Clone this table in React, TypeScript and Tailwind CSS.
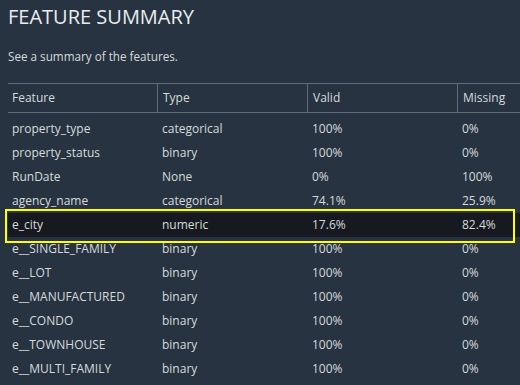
const rows = [
  { feature: "property_type", type: "categorical", valid: "100%", missing: "0%" },
  { feature: "property_status", type: "binary", valid: "100%", missing: "0%" },
  { feature: "RunDate", type: "None", valid: "0%", missing: "100%" },
  { feature: "agency_name", type: "categorical", valid: "74.1%", missing: "25.9%" },
  { feature: "e_city", type: "numeric", valid: "17.6%", missing: "82.4%", highlight: true },
  { feature: "e__SINGLE_FAMILY", type: "binary", valid: "100%", missing: "0%" },
  { feature: "e__LOT", type: "binary", valid: "100%", missing: "0%" },
  { feature: "e__MANUFACTURED", type: "binary", valid: "100%", missing: "0%" },
  { feature: "e__CONDO", type: "binary", valid: "100%", missing: "0%" },
  { feature: "e__TOWNHOUSE", type: "binary", valid: "100%", missing: "0%" },
  { feature: "e__MULTI_FAMILY", type: "binary", valid: "100%", missing: "0%" },
];

const cols = "grid grid-cols-[149px_150px_150px_150px]";

export default function App() {
  return (
    <div
      className="w-[520px] h-[385px] overflow-hidden bg-[#273341] text-[#d5dbdb] relative"
      style={{ fontFamily: '"Open Sans", "Noto Sans", sans-serif' }}
    >
      <div className="pl-2 pt-[3px]">
        {/* Title */}
        <h1 className="text-[20px] leading-[28px] text-[#eaeded]">FEATURE SUMMARY</h1>
        <p className="mt-[17px] text-[11.7px] leading-[16px]">See a summary of the features.</p>

        {/* Table */}
        <div className="mt-[19px] w-[599px]">
          <div className={`${cols} border-t border-b border-[#5f6b7a] h-[30px] items-center text-[12px]`}>
            <div className="pl-1 h-full flex items-center">Feature</div>
            <div className="pl-[5px] h-full flex items-center border-l border-[#5f6b7a]">Type</div>
            <div className="pl-[5px] h-full flex items-center border-l border-[#5f6b7a]">Valid</div>
            <div className="pl-[5px] h-full flex items-center border-l border-[#5f6b7a]">Missing</div>
          </div>
          <div className="pt-[4px]">
            {rows.map((r) => (
              <div
                key={r.feature}
                className={`${cols} h-[24px] items-center text-[12px] ${r.highlight ? "bg-[#16191f]" : ""}`}
              >
                <div className="pl-1">{r.feature}</div>
                <div className="pl-[5px]">{r.type}</div>
                <div className="pl-[5px]">{r.valid}</div>
                <div className="pl-[5px]">{r.missing}</div>
              </div>
            ))}
          </div>
        </div>
      </div>

      {/* Annotation box around highlighted row */}
      <div className="absolute left-[5px] top-[209px] w-[510px] h-[34px] border-2 border-[#ffff00] pointer-events-none" />
    </div>
  );
}
